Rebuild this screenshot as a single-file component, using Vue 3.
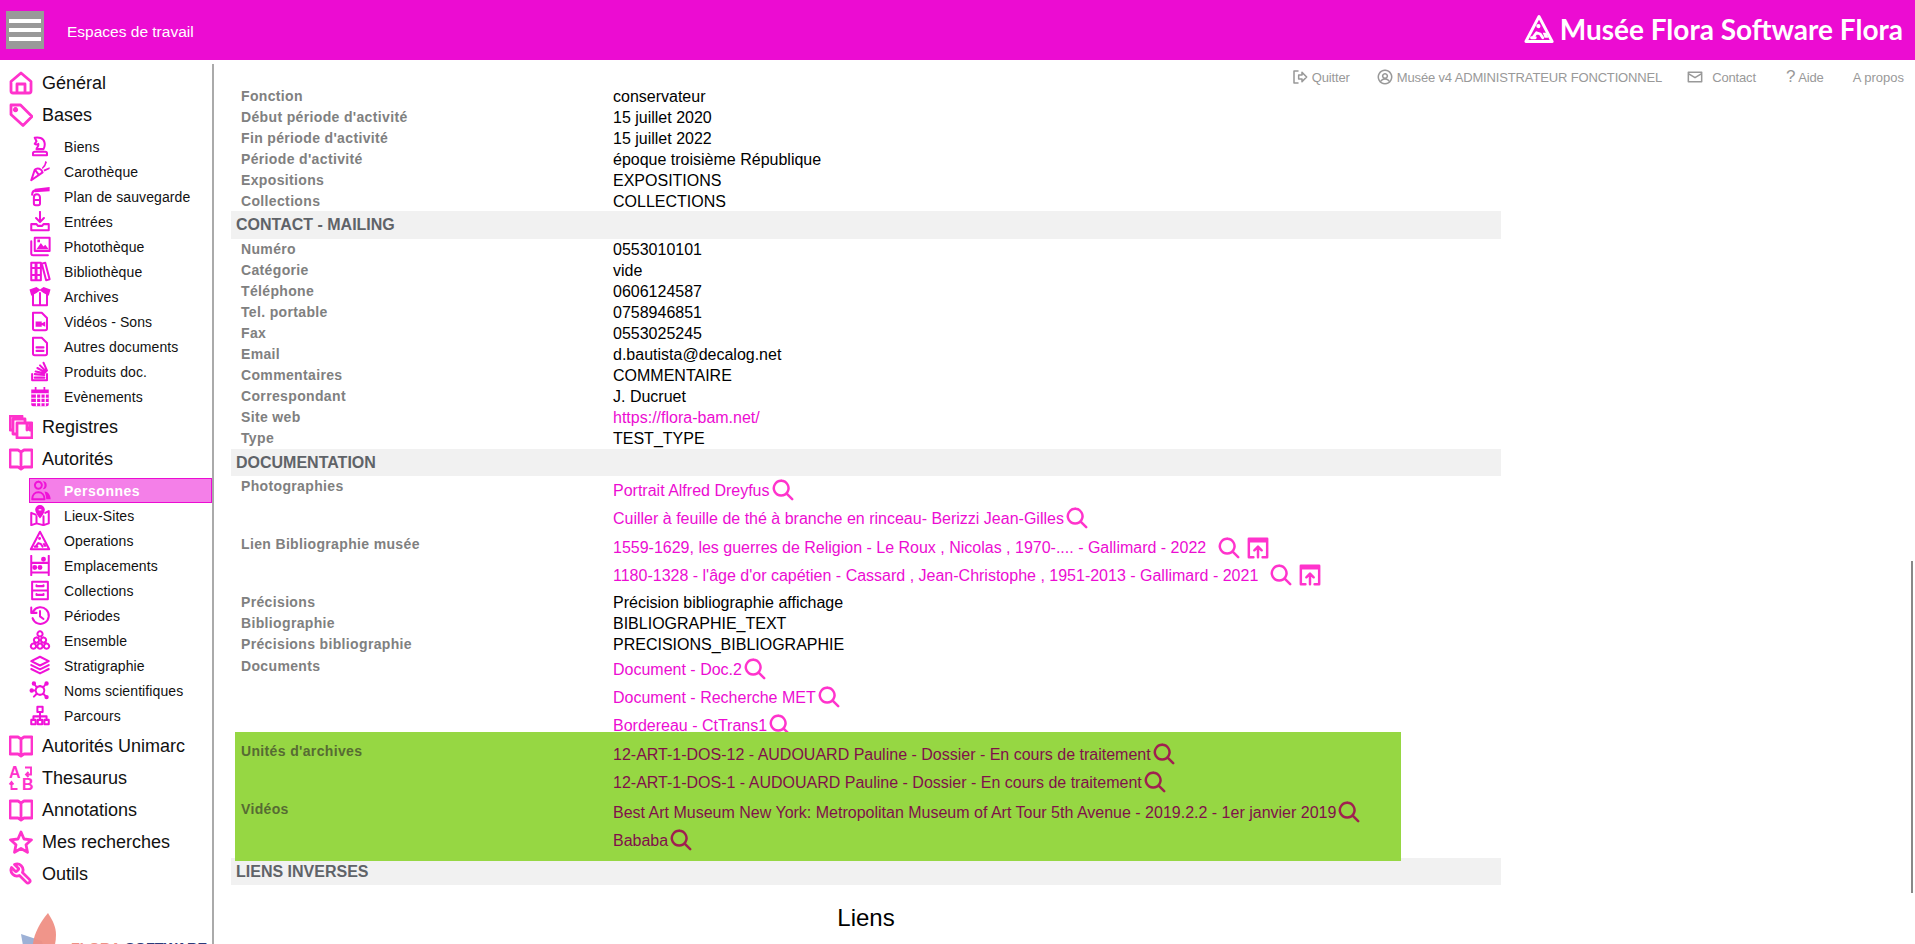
<script setup>
import { h } from 'vue'

const paths = {
  home: { s: 'M2 10.500 12 2l10 8.500V20a2 2 0 0 1-2 2H4a2 2 0 0 1-2-2zM8 22v-9h8v9' },
  tag: { s: 'M2 2h9.500L23 13.500 14 22.500 2 11.500zM6.500 5.500a1.200 1.200 0 1 0 .01 0' },
  knight: { s: 'M6 2c4-1 10 0 11 5 1 3 0 6-1 8H8c0-2 3-3 2-6-1 1-3 1-4 0l2-3zM4 22v-2a2 2 0 0 1 2-2h12a2 2 0 0 1 2 2v2z' },
  bag: { s: 'M2 22l4-12c3-3 8-1 9 3zM7 11l3 4', f: 'M14 8l3-4 1-4 2 1-2 5-3 3zM16 10l7-3v2l-6 3z' },
  fire: { s: 'M5 13a3.500 3.500 0 0 1 7 0v7a2 2 0 0 1-2 2H7a2 2 0 0 1-2-2zM5 16h7M3 10c0-3 2-5 5-5', f: 'M6 3l17-2v5L6 7z' },
  inbox: { s: 'M12 1v11M7.500 8l4.500 4.500L16.500 8M2 15v7h20v-7h-6l-1.500 2h-5L8 15z' },
  photo: { s: 'M6 2h17v15H6zM2 6v14a2 2 0 0 0 2 2h17', f: 'M8 15l5-7 3 4 2-2 4 5zM9 4h3v3H9z' },
  books: { s: 'M2 2h5v20H2zM8 2h5v20H8zM14 3l4-1 5 19-4 1zM2 8h5M2 16h5M8 8h5M8 16h5' },
  box: { s: 'M4 9v13h16V9M12 8v14', f: 'M0 4l8-3 4 3 4-3 8 3-2 7-6-3-4-3-4 3-6 3z' },
  video: { s: 'M4 2h10l6 6v12a2 2 0 0 1-2 2H6a2 2 0 0 1-2-2z', f: 'M7 12h7v6H7zM14 14l4-2v6l-4-2z' },
  file: { s: 'M4 2h10l6 6v12a2 2 0 0 1-2 2H6a2 2 0 0 1-2-2zM8 13h8M8 17h8' },
  stack: { s: 'M3 15v7h17v-7M6 19h11M6 15l11 1M7 12l10 2M9 8l9 5M12 5l7 7M16 2l4 9' },
  calendar: { f: 'M2 4h20v17a2 2 0 0 1-2 2H4a2 2 0 0 1-2-2zM6 1h2v4H6zM16 1h2v4h-2z', w: 'M2 9h20M2 14h20M2 19h20M8 9v14M13 9v14M18 9v14' },
  copies: { s: 'M1 1h12v3M1 1v14h3M4 4h12v4M4 4v15h4M8 8h15v15H8zM18 8v7l2-2 1 2V8' },
  book: { s: 'M1 3h8l3 2 3-2h8v17h-8l-3 2-3-2H1zM12 5v17' },
  people: { s: 'M9 2a4 4 0 1 0 .01 0M2 22c0-5 3-8 7-8s7 3 7 8z', f: 'M14 1.500a4.500 4.500 0 1 1 0 9 6 6 0 0 0 0-9zM16 13c4 0 7 4 7 9h-5c0-3-1-6-2-9z' },
  map: { s: 'M7 11L2 9v14l6-2 8 2 6-2V7l-4 2M8 13v8M16 13v10', f: 'M12 0a5.500 5.500 0 0 1 5.500 5.500c0 3-3 7-5.500 10-2.500-3-5.500-7-5.500-10A5.500 5.500 0 0 1 12 0z', w: 'M10.500 5.500h3' },
  works: { s: 'M12 2l10.500 20H1.500zM7 19l3-4 3 1 2 3M6 19h3', f: 'M11.500 8a1.700 1.700 0 1 1 0 3.400 1.700 1.700 0 0 1 0-3.400zM15 15h3l1.500 4h-3z' },
  bed: { s: 'M2 1v22M22 1v22M2 9h20M2 20h20', f: 'M16 2a2.800 2.800 0 1 1 0 5.600 2.800 2.800 0 0 1 0-5.600zM6 11.500a2.800 2.800 0 1 1 0 5.600 2.800 2.800 0 0 1 0-5.600zM12 11.500a2.800 2.800 0 1 1 0 5.600 2.800 2.800 0 0 1 0-5.600z' },
  cabinet: { s: 'M3 2h18v20H3zM3 12h18M8 6v1h8V6M8 16v1h8v-1' },
  history: { s: 'M2 3v6h6M3.500 15a9.500 9.500 0 1 0 1-8L2 9M12 7v6l4 3' },
  group: { s: 'M12 1.500a3 3 0 1 0 .01 0M8 8.500a3 3 0 1 0 .01 0M16 8.500a3 3 0 1 0 .01 0M4.500 15.500a3 3 0 1 0 .01 0M12 15.500a3 3 0 1 0 .01 0M19.500 15.500a3 3 0 1 0 .01 0' },
  layers: { s: 'M12 2l10 5-10 5L2 7zM2 11.500l10 5 10-5M2 16l10 5 10-5' },
  hub: { s: 'M12 7a5 5 0 1 0 .01 0M8 8L5 4M16 8l3-4M7 12H3M8 16l-3 3M16 16l3 3', f: 'M5 1.500a2.500 2.500 0 1 1 0 5 2.500 2.500 0 0 1 0-5zM19.500 1.500a2.500 2.500 0 1 1 0 5 2.500 2.500 0 0 1 0-5zM2.500 9.500a2.500 2.500 0 1 1 0 5 2.500 2.500 0 0 1 0-5zM19.500 17a2.500 2.500 0 1 1 0 5 2.500 2.500 0 0 1 0-5z' },
  sitemap: { s: 'M9 2h6v6H9zM2 17h5v5H2zM9.500 17h5v5h-5zM17 17h5v5h-5zM12 8v9M4.500 17v-4h15v4' },
  star: { s: 'M12 2l3 7 7.500.8-5.500 5 1.500 7.500L12 18.500 5.500 22.300 7 14.800 1.500 9.800 9 9z' },
  wrench: { s: 'M9.300 6.300a1 1 0 0 1 0 1.400l-1.600 1.600a1 1 0 0 1-1.400 0l-3.770-3.770a6 6 0 0 0 7.940 7.940l6.910 6.910a2.120 2.120 0 0 0 3-3l-6.910-6.910a6 6 0 0 0-7.940-7.940l3.760 3.760z' },
  search: { s: 'M10 2a8 8 0 1 0 .01 0M16 16l6 6' },
  open: { s: 'M7 22H2V2h20v20h-5M12 22V11M8 14.500l4-4 4 4', f: 'M2 2h20v4H2z' },
  quit: { s: 'M9 3H3v18h6M10 9h5V5l7 7-7 7v-4h-5z' },
  user: { s: 'M12 2a10 10 0 1 0 .01 0M12 7a3.500 3.500 0 1 0 .01 0M6 18c2-4 10-4 12 0' },
  mail: { s: 'M2 5h20v14H2zM2 7l10 6 10-6' }
}

// petite icone svg, traits + aplats
const Icon = (props) => {
  const p = paths[props.name]
  const kids = []
  if (p.f) kids.push(h('path', { d: p.f, fill: 'currentColor' }))
  if (p.s) kids.push(h('path', { d: p.s, fill: 'none', stroke: 'currentColor', 'stroke-width': 2.3, 'stroke-linejoin': 'round', 'stroke-linecap': 'round' }))
  if (p.w) kids.push(h('path', { d: p.w, fill: 'none', stroke: '#fff', 'stroke-width': 1.4 }))
  return h('svg', { viewBox: '0 0 24 24' }, kids)
}
Icon.props = ['name']

const nav = [
  { label: 'Général', icon: 'home' },
  { label: 'Bases', icon: 'tag', children: [
    { label: 'Biens', icon: 'knight' },
    { label: 'Carothèque', icon: 'bag' },
    { label: 'Plan de sauvegarde', icon: 'fire' },
    { label: 'Entrées', icon: 'inbox' },
    { label: 'Photothèque', icon: 'photo' },
    { label: 'Bibliothèque', icon: 'books' },
    { label: 'Archives', icon: 'box' },
    { label: 'Vidéos - Sons', icon: 'video' },
    { label: 'Autres documents', icon: 'file' },
    { label: 'Produits doc.', icon: 'stack' },
    { label: 'Evènements', icon: 'calendar' }
  ] },
  { label: 'Registres', icon: 'copies' },
  { label: 'Autorités', icon: 'book', children: [
    { label: 'Personnes', icon: 'people', active: true },
    { label: 'Lieux-Sites', icon: 'map' },
    { label: 'Operations', icon: 'works' },
    { label: 'Emplacements', icon: 'bed' },
    { label: 'Collections', icon: 'cabinet' },
    { label: 'Périodes', icon: 'history' },
    { label: 'Ensemble', icon: 'group' },
    { label: 'Stratigraphie', icon: 'layers' },
    { label: 'Noms scientifiques', icon: 'hub' },
    { label: 'Parcours', icon: 'sitemap' }
  ] },
  { label: 'Autorités Unimarc', icon: 'book' },
  { label: 'Thesaurus', icon: 'thesaurus' },
  { label: 'Annotations', icon: 'book' },
  { label: 'Mes recherches', icon: 'star' },
  { label: 'Outils', icon: 'wrench' }
]

const identity = [
  ['Fonction', 'conservateur'],
  ['Début période d\'activité', '15 juillet 2020'],
  ['Fin période d\'activité', '15 juillet 2022'],
  ['Période d\'activité', 'époque troisième République'],
  ['Expositions', 'EXPOSITIONS'],
  ['Collections', 'COLLECTIONS']
]

const contact = [
  ['Numéro', '0553010101'],
  ['Catégorie', 'vide'],
  ['Téléphone', '0606124587'],
  ['Tel. portable', '0758946851'],
  ['Fax', '0553025245'],
  ['Email', 'd.bautista@decalog.net'],
  ['Commentaires', 'COMMENTAIRE'],
  ['Correspondant', 'J. Ducruet'],
  ['Site web', 'https://flora-bam.net/', true],
  ['Type', 'TEST_TYPE']
]

const biblio = [
  ['Précisions', 'Précision bibliographie affichage'],
  ['Bibliographie', 'BIBLIOGRAPHIE_TEXT'],
  ['Précisions bibliographie', 'PRECISIONS_BIBLIOGRAPHIE']
]

const photos = ['Portrait Alfred Dreyfus', 'Cuiller à feuille de thé à branche en rinceau- Berizzi Jean-Gilles']
const biblioLinks = [
  '1559-1629, les guerres de Religion - Le Roux , Nicolas , 1970-.... - Gallimard - 2022',
  '1180-1328 - l\'âge d\'or capétien - Cassard , Jean-Christophe , 1951-2013 - Gallimard - 2021'
]
const documents = ['Document - Doc.2', 'Document - Recherche MET', 'Bordereau - CtTrans1']
const units = [
  '12-ART-1-DOS-12 - AUDOUARD Pauline - Dossier - En cours de traitement',
  '12-ART-1-DOS-1 - AUDOUARD Pauline - Dossier - En cours de traitement'
]
const videos = ['Best Art Museum New York: Metropolitan Museum of Art Tour 5th Avenue - 2019.2.2 - 1er janvier 2019', 'Bababa']
</script>

<template>
  <div class="page">
    <header class="topbar">
      <button class="burger"><span></span><span></span><span></span></button>
      <span class="workspaces">Espaces de travail</span>
      <div class="brand">
        <Icon name="works" class="brand-icon" />
        <span>Musée Flora Software Flora</span>
      </div>
    </header>

    <div class="body">
      <aside class="sidebar">
        <nav>
          <template v-for="item in nav" :key="item.label">
            <a class="nav-main">
              <svg v-if="item.icon === 'thesaurus'" viewBox="0 0 24 24" class="main-icon thesaurus">
                <text x="0" y="12" font-size="16" font-weight="700" font-family="Liberation Sans" fill="currentColor">A</text>
                <text x="13" y="24" font-size="16" font-weight="700" font-family="Liberation Sans" fill="currentColor">B</text>
                <path d="M16 1.500h6v7h-5M19.500 6 17 8.500l2.500 2.500M8.500 23H2.500v-7M.5 18.500l2-2.500 2 2.500" fill="none" stroke="currentColor" stroke-width="1.700" />
              </svg>
              <Icon v-else :name="item.icon" class="main-icon" />
              <span>{{ item.label }}</span>
            </a>
            <ul v-if="item.children" class="subnav">
              <li v-for="sub in item.children" :key="sub.label" :class="{ active: sub.active }">
                <Icon :name="sub.icon" class="sub-icon" />
                <span>{{ sub.label }}</span>
              </li>
            </ul>
          </template>
        </nav>
        <div class="sidebar-logo">
          <svg viewBox="0 0 60 36" class="petals">
            <path d="M3 21 24 28 30 50 8 50z" fill="#8ca3cf" opacity=".85" />
            <path d="M30 0c5 8 8 14 8 22 0 8-2 14-4 18L15 40c-2-14 5-28 15-40z" fill="#ef8f84" opacity=".95" />
          </svg>
          <span class="logo-text"><b class="coral">FLORA</b> <b class="navy">SOFTWARE</b></span>
        </div>
      </aside>

      <main class="content">
        <div class="toplinks">
          <a><Icon name="quit" class="tl-icon" />Quitter</a>
          <a><Icon name="user" class="tl-icon" />Musée v4 ADMINISTRATEUR FONCTIONNEL</a>
          <a><Icon name="mail" class="tl-icon mail" />Contact</a>
          <a><span class="qm">?</span>Aide</a>
          <a>A propos</a>
        </div>

        <div class="sheet">
          <div v-for="row in identity" :key="row[0]" class="row">
            <span class="label">{{ row[0] }}</span>
            <span class="value">{{ row[1] }}</span>
          </div>

          <h2 class="section first">CONTACT - MAILING</h2>
          <div v-for="row in contact" :key="row[0]" class="row">
            <span class="label">{{ row[0] }}</span>
            <span class="value" :class="{ link: row[2] }">{{ row[1] }}</span>
          </div>

          <h2 class="section">DOCUMENTATION</h2>
          <div class="row">
            <span class="label">Photographies</span>
            <div class="links">
              <a v-for="txt in photos" :key="txt" class="link-line">{{ txt }}<Icon name="search" class="search" /></a>
            </div>
          </div>
          <div class="row row-tight">
            <span class="label">Lien Bibliographie musée</span>
            <div class="links">
              <a v-for="txt in biblioLinks" :key="txt" class="link-line">
                {{ txt }}<Icon name="search" class="search wide" /><Icon name="open" class="search open" />
              </a>
            </div>
          </div>
          <div v-for="row in biblio" :key="row[0]" class="row">
            <span class="label">{{ row[0] }}</span>
            <span class="value">{{ row[1] }}</span>
          </div>
          <div class="row row-docs">
            <span class="label">Documents</span>
            <div class="links">
              <a v-for="txt in documents" :key="txt" class="link-line">{{ txt }}<Icon name="search" class="search" /></a>
            </div>
          </div>

          <div class="green">
            <div class="row">
              <span class="label">Unités d'archives</span>
              <div class="links">
                <a v-for="txt in units" :key="txt" class="link-line">{{ txt }}<Icon name="search" class="search" /></a>
              </div>
            </div>
            <div class="row">
              <span class="label">Vidéos</span>
              <div class="links">
                <a v-for="txt in videos" :key="txt" class="link-line">{{ txt }}<Icon name="search" class="search" /></a>
              </div>
            </div>
          </div>

          <h2 class="section last">LIENS INVERSES</h2>
          <h3 class="liens">Liens</h3>
        </div>
        <div class="scroll-thumb"></div>
      </main>
    </div>
  </div>
</template>

<style>
html, body {
  margin: 0;
  overflow: hidden;
  background: #fff;
}
</style>

<style scoped>
.page {
  height: 944px;
  display: flex;
  flex-direction: column;
  overflow: hidden;
  font-family: "Liberation Sans", Arial, sans-serif;
  color: #000;
}

.topbar {
  height: 60px;
  flex: none;
  display: flex;
  align-items: center;
  background: #ec0cd2;
  color: #fff;
  padding: 0 12px 0 6px;
}

.burger {
  width: 38px;
  height: 38px;
  background: #999;
  border: 0;
  padding: 0 3px;
  display: flex;
  flex-direction: column;
  justify-content: center;
  gap: 5px;
}

.burger span {
  height: 4px;
  background: #fff;
}

.workspaces {
  margin: 3px 0 0 23px;
  font-size: 15.500px;
}

.brand {
  margin: 0 0 2px auto;
  display: flex;
  align-items: center;
  gap: 6px;
  font-family: Lato, sans-serif;
  font-size: 28px;
  font-weight: 700;
}

.brand-icon {
  width: 30px;
  height: 30px;
}

.body {
  flex: 1;
  display: flex;
  min-height: 0;
}

.sidebar {
  width: 212px;
  flex: none;
  margin-top: 4px;
  padding-top: 3px;
  border-right: 2px solid #aaa;
  overflow: hidden;
}

.nav-main {
  height: 32px;
  display: flex;
  align-items: center;
  padding-left: 9px;
  gap: 9px;
  font-size: 18px;
  color: #111;
}

.main-icon {
  width: 24px;
  height: 24px;
  flex: none;
  color: #ff33cc;
}

.main-icon :deep(path) {
  stroke-width: 2.800;
}

.thesaurus {
  overflow: visible;
}

.thesaurus path {
  stroke-width: 1.900;
}

.subnav {
  list-style: none;
  margin: 0;
  padding: 3px 0 2px;
}

.subnav li {
  height: 25px;
  box-sizing: border-box;
  display: flex;
  align-items: center;
  padding-left: 29px;
  gap: 13px;
  font-size: 14px;
  letter-spacing: .1px;
  color: #111;
}

.subnav li.active {
  margin-left: 29px;
  padding-left: 0;
  gap: 12px;
  background: #f47fe8;
  border: 1px solid #ec0cd2;
  color: #fff;
  font-weight: 700;
  letter-spacing: .5px;
}

.sub-icon {
  width: 22px;
  height: 21px;
  flex: none;
  color: #f012d8;
}

.sidebar-logo {
  display: flex;
  align-items: flex-end;
  margin-top: 23px;
  padding-left: 18px;
  height: 36px;
}

.petals {
  width: 60px;
  height: 36px;
  flex: none;
}

.logo-text {
  font-size: 14.500px;
  line-height: 14px;
  white-space: nowrap;
  margin: 0 0 -6px -7px;
}

.coral { color: #ef8f84; }
.navy { color: #2b3a7a; }

.content {
  flex: 1;
  position: relative;
  min-width: 0;
  padding: 26px 0 0 17px;
}

.toplinks {
  position: absolute;
  top: 5px;
  right: 11px;
  display: flex;
  align-items: center;
  height: 24px;
  font-size: 13px;
  letter-spacing: -.15px;
  color: #999;
}

.toplinks a {
  display: flex;
  align-items: center;
  margin-left: 27px;
}

.toplinks a:nth-child(3) {
  margin-left: 25px;
}

.toplinks a:nth-child(4) {
  margin-left: 30px;
}

.toplinks a:nth-child(5) {
  margin-left: 29px;
  letter-spacing: 0;
}

.tl-icon {
  width: 16px;
  height: 16px;
  margin-right: 4px;
}

.tl-icon.mail {
  margin-right: 9px;
}

.qm {
  font-size: 17px;
  margin-right: 3px;
}

.sheet {
  width: 1270px;
}

.row {
  display: grid;
  grid-template-columns: 372px 1fr;
  padding-left: 10px;
  line-height: 21px;
}

.label {
  font-size: 14px;
  font-weight: 700;
  letter-spacing: .35px;
  color: #808080;
}

.value {
  font-size: 16px;
}

.link {
  color: #ec0cd2;
}

.links {
  display: flex;
  flex-direction: column;
}

.link-line {
  height: 28px;
  display: flex;
  align-items: center;
  font-size: 16px;
  color: #ec0cd2;
  white-space: pre;
}

.row-tight {
  margin: 2px 0 3px;
}

.row-tight .link-line {
  height: 27.500px;
}

.row-docs .label {
  padding-top: 1px;
}

.search {
  width: 22px;
  height: 22px;
  flex: none;
  margin-left: 2px;
  color: #ff33cc;
}

.search :deep(path) {
  stroke-width: 2.700;
}

.search.wide {
  margin-left: 12px;
}

.search.open {
  margin-left: 7px;
}

.section {
  margin: 0;
  height: 27px;
  padding-left: 5px;
  background: #f1f1f1;
  font-size: 16px;
  font-weight: 700;
  line-height: 27px;
  color: #5f6368;
}

.section.first {
  margin-top: -1px;
  height: 28px;
}

.section.last {
  margin-top: -3px;
}

.green {
  position: relative;
  z-index: 1;
  width: 1166px;
  box-sizing: border-box;
  margin: -7px 0 0 4px;
  padding: 8px 0 7px;
  background: #96d743;
}

.green .row {
  padding-left: 6px;
}

.green .row + .row {
  margin-top: 2px;
}

.green .label {
  padding-top: 1px;
  color: #566b33;
}

.green .link-line {
  color: #80104a;
}

.green .search {
  color: #a02050;
}

.liens {
  margin: 19px 0 0;
  text-align: center;
  font-size: 24px;
  font-weight: 400;
  line-height: 28px;
}

.scroll-thumb {
  position: absolute;
  top: 501px;
  right: 2px;
  width: 2px;
  height: 332px;
  background: #888;
}
</style>
